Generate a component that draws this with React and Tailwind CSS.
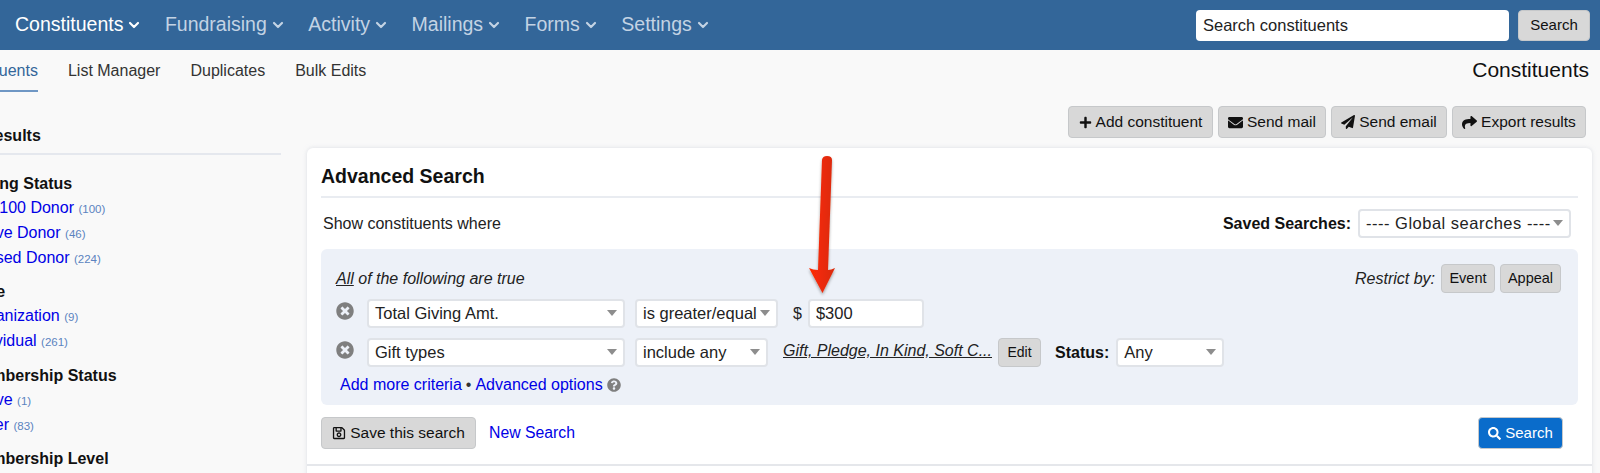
import React from "react";
import { ChevronDown } from "lucide-react";
import { FaPlus, FaEnvelope, FaPaperPlane, FaShare, FaRegSave, FaSearch, FaTimesCircle, FaQuestionCircle } from "react-icons/fa";

function NavItem({ label, active }) {
  return (
    <div className={`flex items-center gap-[3px] text-[19.5px] ${active ? "font-medium text-white" : "text-[#c3d3e4]"}`}>
      <span>{label}</span>
      <ChevronDown size={16} strokeWidth={3.2} />
    </div>
  );
}

function Btn({ icon, children, className = "" }) {
  return (
    <div className={`flex items-center justify-center gap-[4px] rounded-[4px] border border-[#c6c8ca] bg-[#d8d8d8] text-[#111] ${className}`}>
      {icon}
      <span>{children}</span>
    </div>
  );
}

function Sel({ children, className = "" }) {
  return (
    <div className={`relative flex h-[29px] items-center rounded-[4px] border-2 border-[#e0e3e8] bg-white pl-[6px] text-[16.5px] text-[#222] ${className}`}>
      <span className="whitespace-nowrap">{children}</span>
      <span className="absolute right-[6px] top-[9px] h-0 w-0 border-x-[5px] border-t-[6px] border-x-transparent border-t-[#8d8d8d]" />
    </div>
  );
}

function Group({ title, items, className = "" }) {
  return (
    <div className={className}>
      <div className="h-[21px] text-[16px] leading-[20px] font-bold text-[#111] whitespace-nowrap">{title}</div>
      {items.map(([l, n]) => (
        <div key={l} className="h-[25px] text-[16px] leading-[25px] whitespace-nowrap">
          <span className="text-[#0000e6]">{l}</span>{" "}
          <span className="text-[11.5px] text-[#5b83c0]">({n})</span>
        </div>
      ))}
    </div>
  );
}

export default function App() {
  return (
    <div className="relative h-[473px] w-[1600px] overflow-hidden bg-[#f9f9f9] font-['Liberation_Sans',Arial,sans-serif] text-[16px]">
      <header className="flex h-[50px] items-center justify-between bg-[#336699] pl-[15px] pr-[10px]">
        <nav className="flex items-center gap-[22.5px]">
          <NavItem label="Constituents" active />
          <NavItem label="Fundraising" />
          <NavItem label="Activity" />
          <NavItem label="Mailings" />
          <NavItem label="Forms" />
          <NavItem label="Settings" />
        </nav>
        <div className="flex items-center gap-[9px]">
          <input readOnly value="Search constituents" className="h-[31px] w-[313px] rounded-[4px] bg-white px-[7px] text-[16.5px] text-[#222] outline-none" />
          <Btn className="h-[31px] w-[72px] text-[15px]">Search</Btn>
        </div>
      </header>

      <div className="flex h-[56px] items-start justify-between pr-[11px]">
        <div className="ml-[-51px] flex gap-[30px] text-[16px] text-[#333]">
          <div className="flex h-[42px] items-center border-b-2 border-[#6f97c4] pt-[1px] font-medium text-[#336699]">Constituents</div>
          <div className="flex h-[41px] items-center pt-[1px]">List Manager</div>
          <div className="flex h-[41px] items-center pt-[1px]">Duplicates</div>
          <div className="flex h-[41px] items-center pt-[1px]">Bulk Edits</div>
        </div>
        <div className="pt-[7px] text-[21px] leading-[26px] text-[#111]">Constituents</div>
      </div>

      <div className="flex items-start">
        <aside className="ml-[-31px] mt-[18px] w-[312px] shrink-0">
          <div className="h-[31px] border-b-2 border-[#e5e8ee] pl-[14px] text-[16px] leading-[24px] font-bold text-[#111]">Results</div>
          <Group className="mt-[19px]" title="Giving Status" items={[["Top 100 Donor", 100], ["Active Donor", 46], ["Lapsed Donor", 224]]} />
          <Group className="mt-[12px]" title="Type" items={[["Organization", 9], ["Individual", 261]]} />
          <Group className="mt-[13px]" title="Membership Status" items={[["Active", 1], ["Other", 83]]} />
          <Group className="mt-[12px]" title="Membership Level" items={[]} />
        </aside>

        <main className="ml-[26px] w-[1285px] shrink-0">
          <div className="mb-[10px] flex justify-end gap-[5px] pr-[6px] text-[15.5px]">
            <Btn className="h-[32px] w-[145px]" icon={<FaPlus size={13} />}>Add constituent</Btn>
            <Btn className="h-[32px] w-[108px]" icon={<FaEnvelope size={15} />}>Send mail</Btn>
            <Btn className="h-[32px] w-[116px]" icon={<FaPaperPlane size={14} />}>Send email</Btn>
            <Btn className="h-[32px] w-[134px]" icon={<FaShare size={15} />}>Export results</Btn>
          </div>

          <section className="h-[339px] rounded-t-[6px] bg-white px-[14px] shadow-[0_0_4px_rgba(200,205,215,0.6)]">
            <div className="flex h-[50px] items-end border-b-2 border-[#e9ecf1] pb-[5px] text-[19.5px] font-bold text-[#111]">Advanced Search</div>
            <div className="flex h-[51px] items-center justify-between pl-[2px] pr-[7px]">
              <span className="text-[#222]">Show constituents where</span>
              <div className="flex items-center gap-[7px]">
                <b className="text-[#111]">Saved Searches:</b>
                <Sel className="w-[213px] tracking-[0.5px]">---- Global searches ----</Sel>
              </div>
            </div>

            <div className="relative h-[156px] rounded-[6px] bg-[#edf1f8] pl-[15px] pr-[17px] pt-[15px]">
              <div className="flex h-[29px] items-center justify-between">
                <span className="italic text-[#222]"><span className="underline">All</span> of the following are true</span>
                <div className="flex items-center gap-[5px] text-[14.5px]">
                  <span className="mr-[1px] text-[16px] italic text-[#222]">Restrict by:</span>
                  <Btn className="h-[29px] w-[54px]">Event</Btn>
                  <Btn className="h-[29px] w-[61px]">Appeal</Btn>
                </div>
              </div>
              <div className="mt-[6px] flex h-[29px] items-center">
                <FaTimesCircle size={18} className="mb-[6px] text-[#7f7f7f]" />
                <Sel className="ml-[13px] w-[258px]">Total Giving Amt.</Sel>
                <Sel className="ml-[10px] w-[143px]">is greater/equal</Sel>
                <span className="ml-[15px] text-[#222]">$</span>
                <input readOnly value="$300" className="ml-[6px] h-[29px] w-[116px] rounded-[4px] border-2 border-[#e0e3e8] bg-white px-[6px] text-[16.5px] text-[#222] outline-none" />
              </div>
              <div className="mt-[10px] flex h-[29px] items-center">
                <FaTimesCircle size={18} className="mb-[6px] text-[#7f7f7f]" />
                <Sel className="ml-[13px] w-[258px]">Gift types</Sel>
                <Sel className="ml-[10px] w-[133px]">include any</Sel>
                <span className="mb-[3px] ml-[15px] w-[209px] whitespace-nowrap text-[16px] italic text-[#222] underline">Gift, Pledge, In Kind, Soft C...</span>
                <Btn className="mb-[1px] ml-[6px] h-[29px] w-[43px] text-[14px]">Edit</Btn>
                <b className="ml-[14px] text-[#111]">Status:</b>
                <Sel className="ml-[7px] w-[108px]">Any</Sel>
              </div>
              <div className="ml-[4px] mt-[6px] flex items-center gap-[4px] text-[#0000e6]">
                <span>Add more criteria</span>
                <span className="text-[#333]">•</span>
                <span>Advanced options</span>
                <FaQuestionCircle size={14} className="text-[#7f7f7f]" />
              </div>
            </div>

            <div className="mt-[12px] flex items-center justify-between pr-[15px]">
              <div className="flex items-center gap-[13px]">
                <Btn className="h-[32px] w-[155px] text-[15.5px]" icon={<FaRegSave size={14} />}>Save this search</Btn>
                <span className="text-[15.8px] text-[#0000e6]">New Search</span>
              </div>
              <Btn className="h-[32px] w-[85px] border-[#0a65b8] !bg-[#0a6ccb] text-[15px] !text-white" icon={<FaSearch size={13} />}>Search</Btn>
            </div>
            <div className="-mx-[14px] mt-[15px] h-[2px] bg-[#e5e7eb]" />
          </section>
        </main>
      </div>

      <svg className="absolute left-[800px] top-[150px]" width="44" height="155" viewBox="0 0 44 155">
        <defs>
          <filter id="s" x="-50%" y="-10%" width="200%" height="120%">
            <feDropShadow dx="0" dy="2" stdDeviation="1.5" floodColor="#000" floodOpacity="0.35" />
          </filter>
          <linearGradient id="g" x1="0" y1="0" x2="1" y2="0">
            <stop offset="0" stopColor="#ff2c05" />
            <stop offset="1" stopColor="#d92a0c" />
          </linearGradient>
        </defs>
        <path d="M22 10 Q22.5 6 27 6 Q32 6 32 10 L28 120 Q31 120 35 118 L22.5 143 L9 118 Q13 120 18 120 Z" fill="url(#g)" filter="url(#s)" />
      </svg>
    </div>
  );
}
